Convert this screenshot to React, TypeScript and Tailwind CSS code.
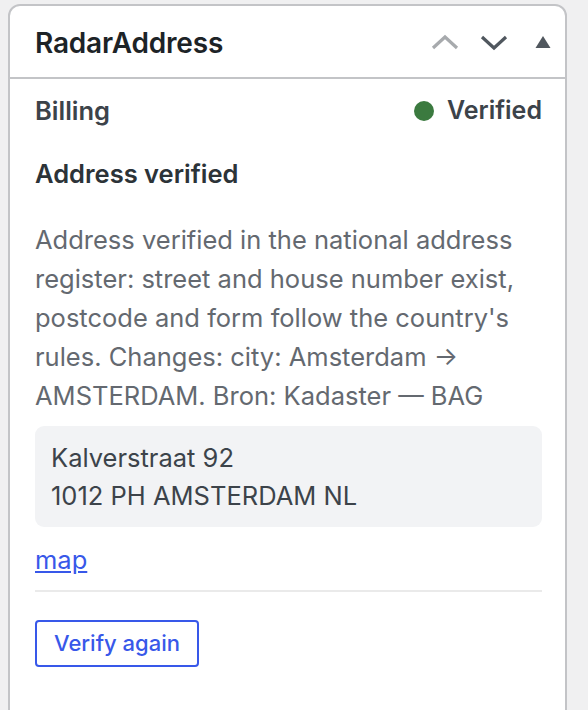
export default function App() {
  return (
    <div className="w-[588px] h-[710px] overflow-hidden bg-[#f0f0f1] pt-[4px] pl-[8px] font-['Inter','Liberation_Sans',sans-serif]">
      <section className="w-[559px] h-[720px] bg-white border-2 border-[#c3c4c7] rounded-[12px]">
        {/* header */}
        <div className="h-[73px] flex items-center justify-between pl-[25px] pr-[14px] border-b-2 border-[#c3c4c7]">
          <h2 className="text-[28px] font-semibold text-[#1d2327] tracking-[-0.2px] pt-[2px]">RadarAddress</h2>
          <div className="flex items-center">
            <svg width="30" height="20" viewBox="0 0 30 20" className="mr-[19px]">
              <path d="M3 16 L15 5 L27 16" fill="none" stroke="#a7aaad" strokeWidth="3.2" />
            </svg>
            <svg width="30" height="20" viewBox="0 0 30 20" className="mr-[26px]">
              <path d="M3 5 L15 16 L27 5" fill="none" stroke="#50575e" strokeWidth="3.2" />
            </svg>
            <svg width="16" height="14" viewBox="0 0 16 14">
              <path d="M8 1 L15.5 13 L0.5 13 Z" fill="#50575e" />
            </svg>
          </div>
        </div>

        {/* body */}
        <div className="pl-[25px] pr-[23px] pt-[15px]">
          <div className="flex items-center justify-between h-[34px]">
            <span className="text-[25.5px] font-semibold text-[#3c434a]">Billing</span>
            <span className="flex items-center gap-[13px]">
              <span className="w-[20px] h-[20px] rounded-full bg-[#3b7a3f]" />
              <span className="text-[25px] font-semibold text-[#3c434a]">Verified</span>
            </span>
          </div>

          <h3 className="mt-[29px] text-[25.5px] font-semibold text-[#2c3338] leading-[34px]">Address verified</h3>

          <p className="mt-[29px] text-[25.5px] leading-[39px] text-[#646970]">
            Address verified in the national address register: street and house number exist, postcode and form follow the country's rules. Changes: city: Amsterdam → AMSTERDAM. Bron: Kadaster — BAG
          </p>

          <div className="mt-[11px] bg-[#f2f3f5] rounded-[9px] px-[16px] py-[12.5px] text-[25.5px] leading-[38px] text-[#3c434a]">
            <div>Kalverstraat 92</div>
            <div>1012 PH AMSTERDAM NL</div>
          </div>

          <a href="#" className="inline-block mt-[16px] text-[25.5px] leading-[34px] text-[#3858e9] underline">map</a>

          <div className="mt-[13px] h-[2px] bg-[#eaeaea]" />

          <button className="mt-[28px] h-[47px] px-[17px] border-2 border-[#3858e9] rounded-[4px] text-[22px] font-medium text-[#3858e9]">
            Verify again
          </button>
        </div>
      </section>
    </div>
  );
}
